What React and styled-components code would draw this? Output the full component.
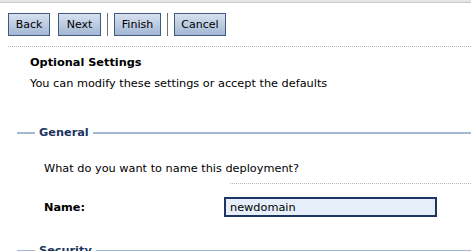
import styled, { createGlobalStyle } from "styled-components";

const GlobalStyle = createGlobalStyle`
  html, body {
    margin: 0;
    padding: 0;
    background: #ffffff;
    font-family: "DejaVu Sans", Tahoma, sans-serif;
    font-size: 11.3px;
    color: #000000;
    overflow: hidden;
  }
`;

const App = () => {
  return (
    <Page>
      <GlobalStyle />
      <TopEdge />
      <Toolbar>
        <Button w={42}>Back</Button>
        <Button w={43} gap={8}>Next</Button>
        <Divider />
        <Button w={47}>Finish</Button>
        <Divider />
        <Button w={52}>Cancel</Button>
      </Toolbar>
      <Dotted inset={8} top={10} />
      <Intro>
        <Title>Optional Settings</Title>
        <Desc>You can modify these settings or accept the defaults</Desc>
      </Intro>
      <Section>
        <Legend>General</Legend>
        <Question>What do you want to name this deployment?</Question>
        <Dotted inset={213} top={7} />
        <FieldRow>
          <Label>Name:</Label>
          <Input defaultValue="newdomain" />
        </FieldRow>
      </Section>
      <Section>
        <Legend>Security</Legend>
      </Section>
    </Page>
  );
};

export default App;

const Page = styled.div`
  width: 471px;
  height: 251px;
  overflow: hidden;
`;

const TopEdge = styled.div`
  height: 2px;
  background: #e4e4e4;
  border-bottom: 1px solid #c8c8c8;
`;

const Toolbar = styled.div`
  display: flex;
  align-items: center;
  padding: 10px 8px 0 8px;
  height: 23px;
`;

const Button = styled.button`
  width: ${(props) => props.w}px;
  height: 23px;
  margin-left: ${(props) => props.gap || 0}px;
  padding: 0;
  font-family: "DejaVu Sans", Tahoma, sans-serif;
  font-size: 11px;
  color: #000;
  border: 1px solid #3f5a7e;
  background: linear-gradient(#d6e1ef, #a2b7d3);
  cursor: pointer;
`;

const Divider = styled.div`
  width: 1px;
  height: 23px;
  margin: 0 6px 0 6px;
  background: #707070;
`;

const Dotted = styled.div`
  margin-top: ${(props) => props.top}px;
  margin-left: ${(props) => props.inset}px;
  border-top: 1px dotted #b8b8b8;
`;

const Intro = styled.div`
  padding: 9px 0 0 30px;
`;

const Title = styled.div`
  font-weight: bold;
  font-size: 11.3px;
  line-height: 14px;
`;

const Desc = styled.div`
  margin-top: 7px;
  line-height: 14px;
`;

const Section = styled.div`
  margin-top: 35px;
  padding-left: 17px;
  &:last-child {
    margin-top: 27px;
  }
`;

const Legend = styled.div`
  display: flex;
  align-items: center;
  gap: 4px;
  font-weight: bold;
  font-size: 11.3px;
  color: #1c3560;
  line-height: 14px;
  &::before {
    content: "";
    width: 18px;
    height: 2px;
    background: #a2b8d2;
  }
  &::after {
    content: "";
    flex: 1;
    height: 2px;
    background: #a2b8d2;
  }
`;

const Question = styled.div`
  margin-top: 22px;
  padding-left: 27px;
  line-height: 14px;
`;

const FieldRow = styled.div`
  display: flex;
  align-items: center;
  padding-left: 27px;
  margin-top: 13px;
`;

const Label = styled.div`
  width: 180px;
  font-weight: bold;
`;

const Input = styled.input`
  width: 201px;
  height: 16px;
  padding: 0 4px;
  border: 2px solid #1e3563;
  background: #e6eefa;
  font-family: "DejaVu Sans", Tahoma, sans-serif;
  font-size: 11.3px;
  color: #000;
  box-sizing: content-box;
  outline: none;
`;
